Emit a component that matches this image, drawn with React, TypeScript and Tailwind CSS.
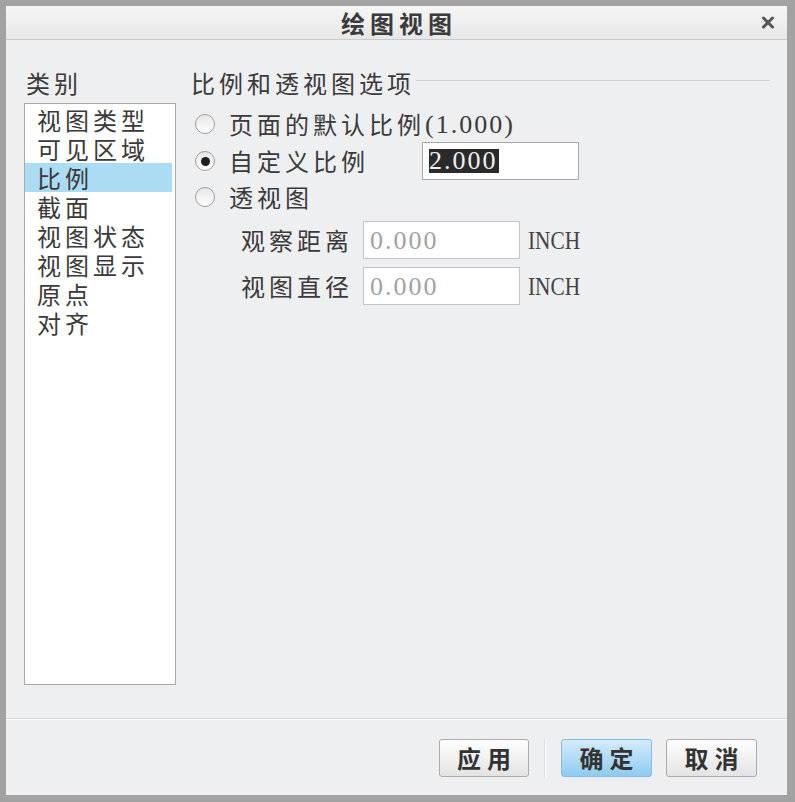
import { useState } from "react";

const cjk = "font-['Noto_Sans_CJK_SC',sans-serif]";
const num = "font-['Liberation_Serif',serif] text-[26px] tracking-[2px]";

const categories = ["视图类型", "可见区域", "比例", "截面", "视图状态", "视图显示", "原点", "对齐"];

function Radio({ checked }: { checked?: boolean }) {
  return (
    <span className="ml-[4px] mr-[14px] flex h-[20px] w-[20px] shrink-0 items-center justify-center rounded-full border border-[#9d9d9d] bg-gradient-to-b from-[#e6e6e6] to-white">
      {checked && <span className="h-[9px] w-[9px] rounded-full bg-[#1e1e1e]" />}
    </span>
  );
}

function Field({ value }: { value: string }) {
  return (
    <div className="flex h-[38px] w-[157px] shrink-0 items-center border border-[#c4c4c4] bg-white pl-[6px]">
      <span className={`${num} text-[#a2a2a2]`}>{value}</span>
    </div>
  );
}

function Unit() {
  return (
    <span className="ml-[8px] inline-block origin-left scale-x-[0.82] font-['Liberation_Serif',serif] text-[26px] text-[#444]">
      INCH
    </span>
  );
}

export default function App() {
  const [selected, setSelected] = useState(2);

  return (
    <div
      className={`${cjk} flex h-[802px] w-[795px] flex-col border-t-[6px] border-r-[8px] border-b-[7px] border-l-[6px] border-[#a2a2a2] bg-[#eeeff1] text-[#3a3a3a]`}
    >
      {/* title bar */}
      <div className="grid h-[34px] shrink-0 grid-cols-[1fr_auto_1fr] items-center border-b border-[#cacaca] bg-gradient-to-b from-[#f6f6f6] to-[#e7e7e7]">
        <div />
        <div className="pl-[5px] text-[24px] font-bold leading-none tracking-[5px] text-[#3b3b3b]">绘图视图</div>
        <div className="flex justify-end pr-[12px]">
          <svg width="14" height="13" viewBox="0 0 14 13">
            <path d="M2.5 2 L11.5 11 M11.5 2 L2.5 11" stroke="#555" strokeWidth="3" strokeLinecap="round" />
          </svg>
        </div>
      </div>

      {/* body */}
      <div className="flex h-[678px] shrink-0 pt-[29px] pl-[18px] pr-[17px]">
        <div className="flex flex-col">
          <div className="h-[28px] pl-[2px] text-[24px] leading-[28px] tracking-[4px]">类别</div>
          <div className="mt-[6px] h-[582px] w-[152px] border border-[#a9a9a9] bg-white pt-[1px] pr-[3px]">
            {categories.map((c, i) => (
              <div
                key={c}
                onClick={() => setSelected(i)}
                className={`h-[29px] pl-[12px] text-[24px] leading-[29px] tracking-[4px] ${
                  i === selected ? "bg-[#abdcf3]" : ""
                }`}
              >
                {c}
              </div>
            ))}
          </div>
        </div>

        <div className="ml-[15px] flex flex-1 flex-col">
          <div className="flex h-[28px] items-center">
            <span className="text-[24px] leading-[28px] tracking-[4px]">比例和透视图选项</span>
            <span className="mb-[5px] ml-[1px] h-[2px] flex-1 border-t border-[#d2d3d5] border-b-white" />
          </div>

          <div className="mt-[10px] flex h-[34px] items-center">
            <Radio />
            <span className="text-[24px] tracking-[4px]">页面的默认比例</span>
            <span className={num}>(1.000)</span>
          </div>

          <div className="mt-[1px] flex h-[38px] items-center">
            <Radio checked />
            <span className="w-[193px] text-[24px] tracking-[4px]">自定义比例</span>
            <div className="flex h-[38px] w-[157px] items-center border border-[#a8a8a8] bg-white pl-[6px]">
              <span className={`${num} bg-[#2a2a2a] pr-[1px] leading-[24px] text-[#f0f0f0]`}>2.000</span>
            </div>
          </div>

          <div className="flex h-[34px] items-center">
            <Radio />
            <span className="text-[24px] tracking-[4px]">透视图</span>
          </div>

          <div className="mt-[7px] flex h-[38px] items-center pl-[50px]">
            <span className="w-[122px] text-[24px] tracking-[4px]">观察距离</span>
            <Field value="0.000" />
            <Unit />
          </div>

          <div className="mt-[8px] flex h-[38px] items-center pl-[50px]">
            <span className="w-[122px] text-[24px] tracking-[4px]">视图直径</span>
            <Field value="0.000" />
            <Unit />
          </div>
        </div>
      </div>

      {/* footer */}
      <div className="h-[2px] shrink-0 border-t border-[#d6d7d9] border-b-white bg-white" />
      <div className="flex h-[74px] shrink-0 items-start justify-end pt-[19px] pr-[30px]">
        <button className="flex h-[38px] w-[90px] items-center justify-center rounded-[3px] border border-[#ababab] bg-gradient-to-b from-white to-[#e3e3e3] pl-[6px] text-[24px] font-bold tracking-[6px] text-[#333]">
          应用
        </button>
        <span className="mx-[15px] h-[38px] w-[2px] border-l border-[#dcdcdc] bg-white" />
        <button className="flex h-[38px] w-[91px] items-center justify-center rounded-[3px] border border-[#8bbbe0] bg-gradient-to-b from-[#d3ecfb] to-[#8ecbee] pl-[6px] text-[24px] font-bold tracking-[6px] text-[#333]">
          确定
        </button>
        <button className="ml-[14px] flex h-[38px] w-[91px] items-center justify-center rounded-[3px] border border-[#ababab] bg-gradient-to-b from-white to-[#e3e3e3] pl-[6px] text-[24px] font-bold tracking-[6px] text-[#333]">
          取消
        </button>
      </div>
    </div>
  );
}
